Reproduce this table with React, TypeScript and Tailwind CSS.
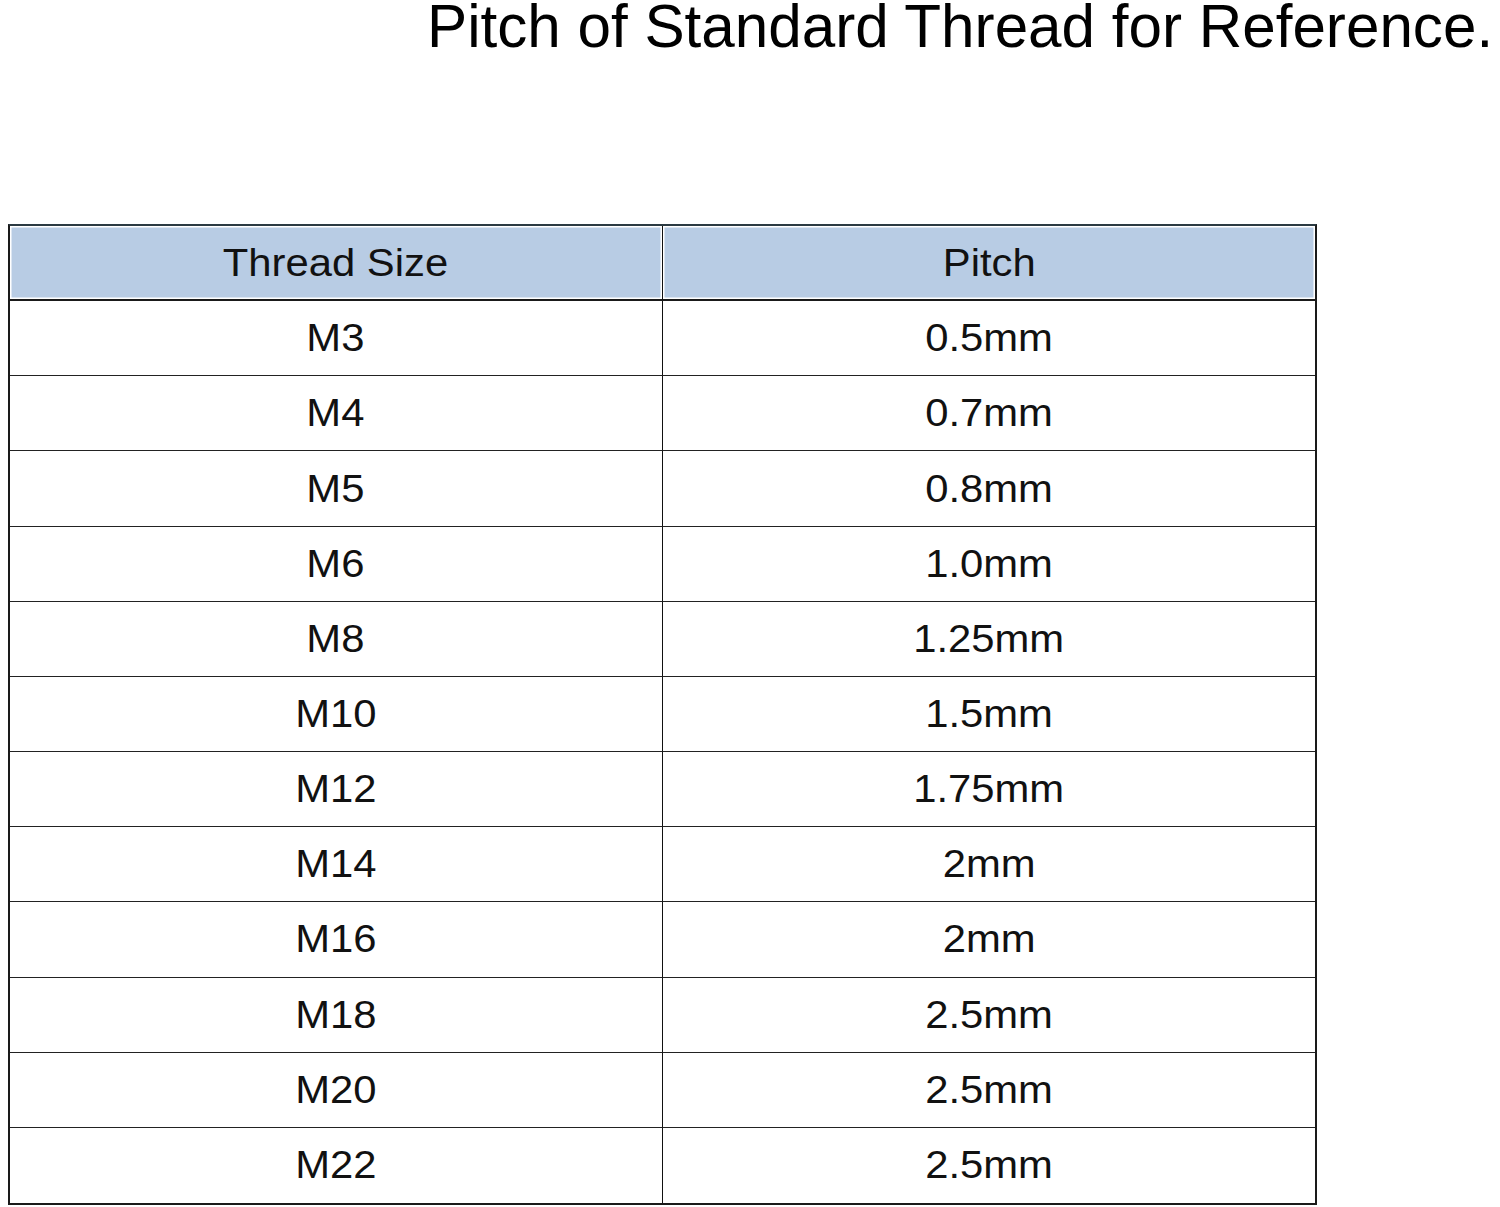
const rows: [string, string][] = [
  ["M3", "0.5mm"],
  ["M4", "0.7mm"],
  ["M5", "0.8mm"],
  ["M6", "1.0mm"],
  ["M8", "1.25mm"],
  ["M10", "1.5mm"],
  ["M12", "1.75mm"],
  ["M14", "2mm"],
  ["M16", "2mm"],
  ["M18", "2.5mm"],
  ["M20", "2.5mm"],
  ["M22", "2.5mm"],
];

function Cell({ text, header, first, last }: { text: string; header?: boolean; first?: boolean; last?: boolean }) {
  return (
    <div
      className={[
        "flex items-center justify-center",
        first ? "border-r border-[#111]" : "",
        header ? "bg-[#b8cce4] shadow-[inset_0_0_0_1.5px_#ffffff] border-b-2 border-b-[#1a1a1a]" : last ? "" : "border-b-[1.5px] border-b-[#222]",
      ].join(" ")}
    >
      <span className="inline-block scale-x-110 text-[38px] leading-none text-[#111]">{text}</span>
    </div>
  );
}

export default function App() {
  return (
    <div
      className="w-[1500px] h-[1207px] overflow-hidden bg-white"
      style={{ fontFamily: '"Liberation Sans", Arial, sans-serif' }}
    >
      {/* Title */}
      <div className="h-[224px] pl-[427px]">
        <h1 className="text-[60.2px] leading-[54px] font-normal text-black whitespace-nowrap">
          Pitch of Standard Thread for Reference.
        </h1>
      </div>

      {/* Table */}
      <div className="ml-[8px] w-[1309px] h-[981px] border-2 border-[#1a1a1a] border-t-[#2b3a42] grid grid-cols-2 grid-rows-[repeat(13,minmax(0,1fr))]">
        <Cell text="Thread Size" header first />
        <Cell text="Pitch" header />
        {rows.map(([size, pitch], i) => (
          <div key={size} className="contents">
            <Cell text={size} first last={i === rows.length - 1} />
            <Cell text={pitch} last={i === rows.length - 1} />
          </div>
        ))}
      </div>
    </div>
  );
}
